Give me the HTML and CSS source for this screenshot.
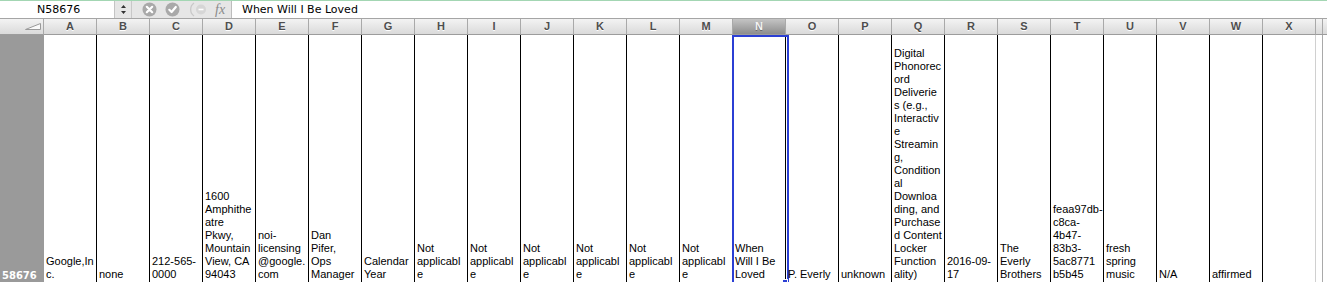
FILE: index.html
```html
<!DOCTYPE html>
<html lang="en">
<head>
    <meta charset="UTF-8">
    <title>N58676</title>
    <link rel="stylesheet" href="styles.css">
</head>
<body>

<div class="formula-bar">
    <div class="name-box">N58676</div>
    <div class="stepper">
        <svg width="7" height="11" viewBox="0 0 7 11"><path d="M3.5 1 L6 4 L1 4 Z M3.5 10 L6 7 L1 7 Z" fill="#333"/></svg>
    </div>
    <div class="fx-tools">
        <svg class="tool" width="15" height="15" viewBox="0 0 15 15">
            <circle cx="7.5" cy="7.5" r="7" fill="#a9a9a9"/>
            <path d="M4.8 4.8 L10.2 10.2 M10.2 4.8 L4.8 10.2" stroke="#fff" stroke-width="2.2" stroke-linecap="round"/>
        </svg>
        <svg class="tool" width="15" height="15" viewBox="0 0 15 15">
            <circle cx="7.5" cy="7.5" r="7" fill="#a9a9a9"/>
            <path d="M4.3 7.8 L6.6 10 L10.8 5" stroke="#fff" stroke-width="2.2" fill="none" stroke-linecap="round" stroke-linejoin="round"/>
        </svg>
        <svg class="tool eq" width="22" height="15" viewBox="0 0 22 15">
            <path d="M4 1 A8 8 0 0 0 4 14" stroke="#c9c9c9" stroke-width="1.3" fill="none"/>
            <circle cx="11" cy="7.5" r="5" fill="#d6d6d6"/>
            <path d="M8.5 7.5 L13.5 7.5" stroke="#fff" stroke-width="1.6"/>
        </svg>
        <span class="fx">fx</span>
    </div>
    <div class="formula-input">When Will I Be Loved</div>
</div>

<div class="sheet">
    <div class="corner">
        <svg width="16" height="7" viewBox="0 0 16 7"><path d="M0.5 6.5 L15.5 6.5 L15.5 0.5 Z" fill="#fafafa" stroke="#9a9a9a" stroke-width="1"/></svg>
    </div>
    <div class="col-head">A</div>
    <div class="col-head">B</div>
    <div class="col-head">C</div>
    <div class="col-head">D</div>
    <div class="col-head">E</div>
    <div class="col-head">F</div>
    <div class="col-head">G</div>
    <div class="col-head">H</div>
    <div class="col-head">I</div>
    <div class="col-head">J</div>
    <div class="col-head">K</div>
    <div class="col-head">L</div>
    <div class="col-head">M</div>
    <div class="col-head active">N</div>
    <div class="col-head">O</div>
    <div class="col-head">P</div>
    <div class="col-head">Q</div>
    <div class="col-head">R</div>
    <div class="col-head">S</div>
    <div class="col-head">T</div>
    <div class="col-head">U</div>
    <div class="col-head">V</div>
    <div class="col-head">W</div>
    <div class="col-head">X</div>
    <div class="col-head gap"></div>

    <div class="row-head">58676</div>
    <div class="cell">Google,In<br>c.</div>
    <div class="cell">none</div>
    <div class="cell">212-565-<br>0000</div>
    <div class="cell">1600<br>Amphithe<br>atre<br>Pkwy,<br>Mountain<br>View, CA<br>94043</div>
    <div class="cell">noi-<br>licensing<br>@google.<br>com</div>
    <div class="cell">Dan<br>Pifer,<br>Ops<br>Manager</div>
    <div class="cell">Calendar<br>Year</div>
    <div class="cell">Not<br>applicabl<br>e</div>
    <div class="cell">Not<br>applicabl<br>e</div>
    <div class="cell">Not<br>applicabl<br>e</div>
    <div class="cell">Not<br>applicabl<br>e</div>
    <div class="cell">Not<br>applicabl<br>e</div>
    <div class="cell">Not<br>applicabl<br>e</div>
    <div class="cell selected">When<br>Will I Be<br>Loved<span class="handle"></span></div>
    <div class="cell">P. Everly</div>
    <div class="cell">unknown</div>
    <div class="cell">Digital<br>Phonorec<br>ord<br>Deliverie<br>s (e.g.,<br>Interactiv<br>e<br>Streamin<br>g,<br>Condition<br>al<br>Downloa<br>ding, and<br>Purchase<br>d Content<br>Locker<br>Function<br>ality)</div>
    <div class="cell">2016-09-<br>17</div>
    <div class="cell">The<br>Everly<br>Brothers</div>
    <div class="cell">feaa97db-<br>c8ca-<br>4b47-<br>83b3-<br>5ac8771<br>b5b45</div>
    <div class="cell">fresh<br>spring<br>music</div>
    <div class="cell">N/A</div>
    <div class="cell">affirmed</div>
    <div class="cell last"></div>
    <div class="cell gap"></div>
</div>

</body>
</html>
```

FILE: styles.css
```css
/* Base */
* {
    margin: 0;
    padding: 0;
    box-sizing: border-box;
}

body {
    font-family: 'Liberation Sans', Arial, sans-serif;
    background: #fff;
    color: #000;
    overflow: hidden;
    height: 282px;
}

/* Formula bar */
.formula-bar {
    display: flex;
    height: 19px;
    border-top: 1px solid #a3d6b3;
    border-bottom: 1px solid #a5a5a5;
    background: #e6e6e6;
    font-family: 'DejaVu Sans', sans-serif;
    font-size: 11px;
}

.name-box {
    flex: 0 0 115px;
    background: #fff;
    border-right: 1px solid #c4c4c4;
    line-height: 17px;
    padding-left: 37px;
}

.stepper {
    flex: 0 0 17px;
    display: flex;
    align-items: center;
    justify-content: center;
    border-right: 1px solid #c8c8c8;
    padding-bottom: 1px;
}

.fx-tools {
    display: flex;
    align-items: center;
    flex: 0 0 99px;
    padding-left: 10px;
}

.tool {
    margin-right: 8px;
}

.tool.eq {
    margin-left: 2px;
    margin-right: 3px;
}

.fx {
    font-family: 'Liberation Serif', serif;
    font-style: italic;
    font-size: 14px;
    color: #8a8a8a;
    line-height: 17px;
}

.formula-input {
    flex: 1;
    background: #fff;
    border-left: 1px solid #bdbdbd;
    padding-left: 10px;
    line-height: 17px;
    font-size: 11px;
}

/* Sheet grid */
.sheet {
    display: grid;
    grid-template-columns: 44px repeat(24, 53px) 1fr;
    grid-template-rows: 16px 248px;
}

.corner,
.col-head {
    background: linear-gradient(#f3f3f3, #dadada);
    border-right: 1px solid #a9a9a9;
    border-bottom: 1px solid #9c9c9c;
}

.corner {
    display: flex;
    align-items: flex-end;
    justify-content: flex-end;
    padding: 0 2px 4px 0;
}

.col-head {
    text-align: center;
    font-weight: bold;
    font-size: 11px;
    line-height: 15px;
    color: #4e4e4e;
    text-shadow: 0 1px 0 #fff;
}

.col-head.active {
    background: linear-gradient(#c4c4c4, #8d8d8d);
    color: #f4f4f4;
    text-shadow: 0 1px 0 #6a6a6a;
}

.col-head.gap {
    border-right: none;
    background: linear-gradient(to right, transparent 6px, #a9a9a9 6px, #a9a9a9 7px, transparent 7px),
                linear-gradient(#f3f3f3, #dadada);
}

/* Data row */
.row-head {
    background: #9a9a9a;
    color: #fff;
    font-family: 'DejaVu Sans', sans-serif;
    font-weight: bold;
    font-size: 10px;
    line-height: 13px;
    display: flex;
    align-items: flex-end;
    padding: 0 0 1px 2px;
}

.cell {
    position: relative;
    display: flex;
    flex-direction: column;
    justify-content: flex-end;
    border-right: 1px solid #000;
    padding: 0 0 2px 2px;
    font-size: 11px;
    line-height: 13px;
    white-space: nowrap;
}

.cell.last {
    border-right: 1px solid #d0d0d0;
}

.cell.gap {
    border-right: none;
    background: linear-gradient(to right, transparent 6px, #a9a9a9 6px, #a9a9a9 7px, transparent 7px);
}

/* Selected cell outline */
.cell.selected::after {
    content: "";
    position: absolute;
    left: -1px;
    top: 0;
    width: 53px;
    height: 247px;
    border: 2px solid #2b3fd4;
}

.handle {
    position: absolute;
    left: 49px;
    top: 244px;
    width: 6px;
    height: 6px;
    background: #2b3fd4;
    border: 1px solid #fff;
    z-index: 1;
}
```
